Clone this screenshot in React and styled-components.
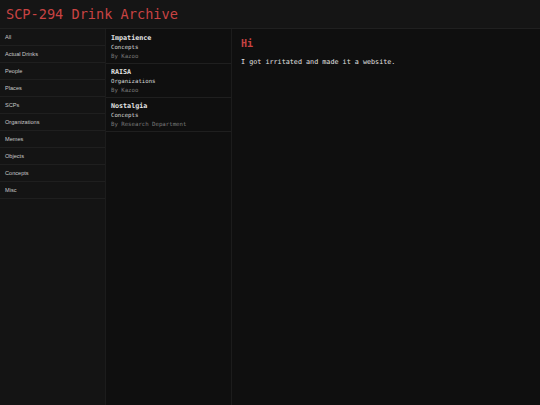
import React from "react";
import styled, { createGlobalStyle } from "styled-components";

const Global = createGlobalStyle`
  html, body { margin: 0; padding: 0; background: #0f0f0f; }
  *, *::before, *::after { box-sizing: border-box; }
  #root { height: 405px; }
`;

const Page = styled.div`
  width: 540px;
  height: 405px;
  display: flex;
  flex-direction: column;
  background: #0f0f0f;
  font-family: "DejaVu Sans Mono", monospace;
  overflow: hidden;
`;

const Header = styled.header`
  height: 29px;
  flex: none;
  display: flex;
  align-items: center;
  padding: 0 6px;
  background: #151515;
  border-bottom: 1px solid #202020;
`;

const Title = styled.h1`
  margin: 0;
  font-size: 13.6px;
  font-weight: normal;
  color: #c84343;
`;

const Body = styled.div`
  flex: 1;
  display: flex;
  min-height: 0;
`;

const Sidebar = styled.nav`
  width: 106px;
  flex: none;
  background: #141414;
  border-right: 1px solid #1c1c1c;
`;

const NavItem = styled.div`
  height: 17px;
  display: flex;
  align-items: center;
  padding: 0 5px;
  border-bottom: 1px solid #1f1f1f;
  font-family: "Liberation Sans", Arial, sans-serif;
  font-size: 5.6px;
  color: #c8c8c8;
`;

const List = styled.div`
  width: 126px;
  flex: none;
  padding-top: 1px;
  background: #0f0f0f;
  border-right: 1px solid #1c1c1c;
`;

const Entry = styled.div`
  height: 34px;
  padding: 4px 5px 0;
  border-bottom: 1px solid #1f1f1f;
  display: flex;
  flex-direction: column;
`;

const EntryTitle = styled.div`
  font-size: 6.7px;
  font-weight: bold;
  color: #e6e6e6;
  line-height: 9px;
`;

const EntryCat = styled.div`
  font-size: 5.7px;
  color: #d8d8d8;
  line-height: 9px;
`;

const EntryBy = styled.div`
  font-size: 5.7px;
  color: #7a7a7a;
  line-height: 9px;
`;

const Main = styled.main`
  flex: 1;
  padding: 8px 9px;
  background: #0f0f0f;
`;

const Heading = styled.h2`
  margin: 0;
  font-size: 10px;
  font-weight: bold;
  color: #c84343;
  line-height: 14px;
`;

const Text = styled.p`
  margin: 6px 0 0;
  font-size: 6.75px;
  color: #e0e0e0;
  line-height: 10px;
`;

const categories = [
  "All",
  "Actual Drinks",
  "People",
  "Places",
  "SCPs",
  "Organizations",
  "Memes",
  "Objects",
  "Concepts",
  "Misc",
];

const entries = [
  { title: "Impatience", cat: "Concepts", by: "By Kazoo" },
  { title: "RAISA", cat: "Organizations", by: "By Kazoo" },
  { title: "Nostalgia", cat: "Concepts", by: "By Research Department" },
];

export default function App() {
  return (
    <Page>
      <Global />
      <Header>
        <Title>SCP-294 Drink Archive</Title>
      </Header>
      <Body>
        <Sidebar>
          {categories.map((c) => (
            <NavItem key={c}>{c}</NavItem>
          ))}
        </Sidebar>
        <List>
          {entries.map((e) => (
            <Entry key={e.title}>
              <EntryTitle>{e.title}</EntryTitle>
              <EntryCat>{e.cat}</EntryCat>
              <EntryBy>{e.by}</EntryBy>
            </Entry>
          ))}
        </List>
        <Main>
          <Heading>Hi</Heading>
          <Text>I got irritated and made it a website.</Text>
        </Main>
      </Body>
    </Page>
  );
}
